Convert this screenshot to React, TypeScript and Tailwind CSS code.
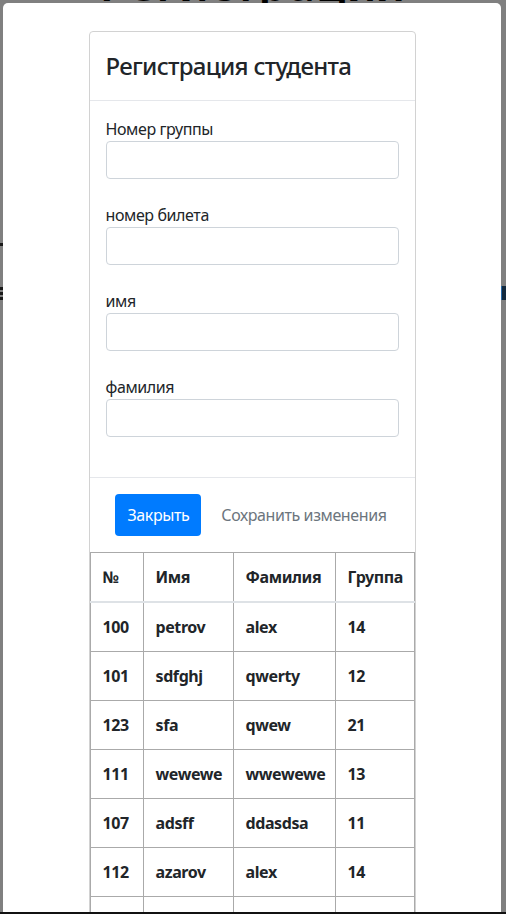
const rows = [
  ['100', 'petrov', 'alex', '14'],
  ['101', 'sdfghj', 'qwerty', '12'],
  ['123', 'sfa', 'qwew', '21'],
  ['111', 'wewewe', 'wwewewe', '13'],
  ['107', 'adsff', 'ddasdsa', '11'],
  ['112', 'azarov', 'alex', '14'],
  ['113', 'ivanov', 'petr', '15'],
];

const fields = ['Номер группы', 'номер билета', 'имя', 'фамилия'];

export default function App() {
  return (
    <div
      className="h-[914px] w-[506px] overflow-hidden flex flex-col bg-[#808080] text-[#212529] tracking-[-0.4px]"
      style={{ fontFamily: '"Noto Sans", "Open Sans", sans-serif' }}
    >
      {/* page behind the overlay, only a sliver shows */}
      <div className="h-[3px] overflow-hidden flex justify-center">
        <div className="text-[46px] leading-none font-semibold text-black mt-[-40px] tracking-wide whitespace-nowrap">
          Регистрация
        </div>
      </div>

      <div className="flex flex-1 min-h-0">
        <div className="w-[3px] flex flex-col">
          <div className="h-[240px]" />
          <div className="h-[3px] bg-[#1a1a1a]" />
          <div className="h-[41px]" />
          <div className="h-[3px] bg-[#1a1a1a]" />
          <div className="h-[2px]" />
          <div className="h-[3px] bg-[#1a1a1a]" />
          <div className="h-[2px]" />
          <div className="h-[3px] bg-[#1a1a1a]" />
        </div>

        <div className="flex-1 bg-white rounded-t-[5px] overflow-hidden pt-[28px]">
          <div className="mx-auto w-[327px] border border-[#d2d2d2] rounded-t-[4px]">
            <div className="px-4 py-4 border-b border-[#e5e7eb]">
              <h4 className="text-[24px] leading-9 font-medium tracking-[-0.7px]">Регистрация студента</h4>
            </div>

            <div className="px-4 pt-4 pb-4">
              {fields.map((f) => (
                <div key={f} className="mb-6">
                  <label className="block text-[16px] leading-6">{f}</label>
                  <input className="block w-full h-[38px] border border-[#ced4da] rounded-[4px] px-3" />
                </div>
              ))}
            </div>

            <div className="flex justify-end p-3 border-t border-[#e5e7eb]">
              <button className="m-1 h-[42px] px-3 rounded-[4px] bg-[#007bff] text-white text-[16px] whitespace-nowrap">
                Закрыть
              </button>
              <button className="m-1 h-[42px] px-3 text-[#6c757d] text-[16px] whitespace-nowrap">
                Сохранить изменения
              </button>
            </div>

            <table className="w-full table-fixed border-collapse text-[16px] font-bold">
              <thead>
                <tr>
                  <th className="w-[53px] border border-[#aaaaaa] border-b-2 border-b-[#dee2e6] px-3 py-3 text-left leading-6">№</th>
                  <th className="w-[90px] border border-[#aaaaaa] border-b-2 border-b-[#dee2e6] px-3 py-3 text-left leading-6">Имя</th>
                  <th className="w-[102px] border border-[#aaaaaa] border-b-2 border-b-[#dee2e6] px-3 py-3 text-left leading-6">Фамилия</th>
                  <th className="border border-[#aaaaaa] border-b-2 border-b-[#dee2e6] px-3 py-3 text-left leading-6">Группа</th>
                </tr>
              </thead>
              <tbody>
                {rows.map((r) => (
                  <tr key={r[0]}>
                    {r.map((c, i) => (
                      <td key={i} className="border border-[#aaaaaa] px-3 py-3 leading-6 whitespace-nowrap">
                        {c}
                      </td>
                    ))}
                  </tr>
                ))}
              </tbody>
            </table>
          </div>
        </div>

        <div className="w-[5px] flex flex-col">
          <div className="h-[283px]" />
          <div className="h-[14px] bg-[#13293d] border-l border-[#2a6aa8]" />
        </div>
      </div>

      <div className="h-[2px] bg-[#111111]" />
    </div>
  );
}
